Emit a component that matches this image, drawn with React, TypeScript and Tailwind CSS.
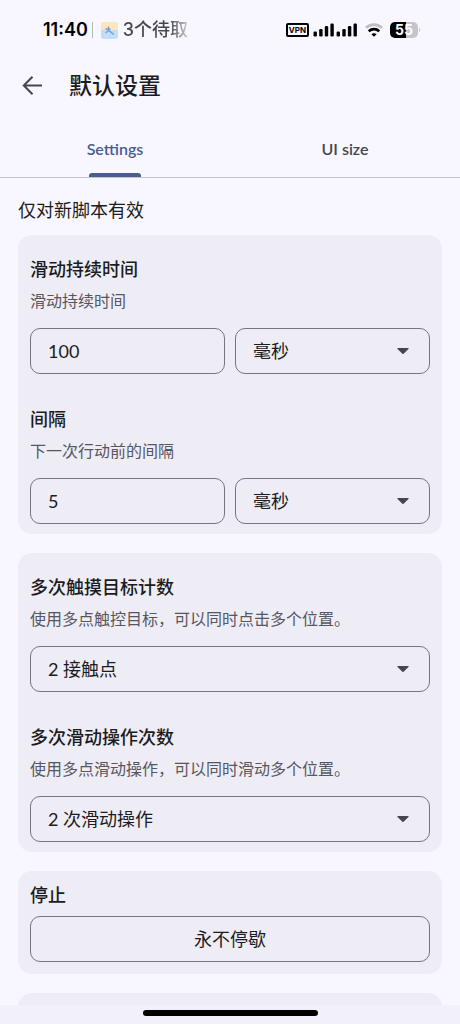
import { ReactNode, useId, useState } from 'react';

const fieldClass =
  'h-[46px] w-full min-w-0 rounded-[10px] border border-[#767680] bg-transparent px-[17px] text-lg text-[#1b1b21] outline-none focus:border-[#4b5c92]';

type SelectProps = {
  options: string[];
  id?: string;
  label?: string;
};

const SelectField = ({ options, id, label }: SelectProps) => (
  <div className="relative min-w-0 flex-1">
    <select id={id} aria-label={label} className={`${fieldClass} appearance-none`}>
      {options.map((option) => (
        <option key={option}>{option}</option>
      ))}
    </select>
    <svg
      className="pointer-events-none absolute top-1/2 right-[21px] h-[6px] w-3 -translate-y-1/2 text-[#45464f]"
      viewBox="0 0 12 6"
      fill="currentColor"
      aria-hidden="true"
    >
      <path d="M.9 0h10.200c.6 0 .8.5.4.9L6.600 5.700c-.35.35-.85.35-1.200 0L.5.9C.1.5.3 0 .9 0z" />
    </svg>
  </div>
);

type SettingProps = {
  title: string;
  description: string;
  children: (id: string) => ReactNode;
};

const Setting = ({ title, description, children }: SettingProps) => {
  const id = useId();

  return (
    <div>
      <label htmlFor={id} className="block text-lg leading-8 font-medium text-[#1b1b21]">
        {title}
      </label>
      <p className="text-base leading-8 text-[#56565f]">{description}</p>
      <div className="mt-[11px] flex gap-[10px]">{children(id)}</div>
    </div>
  );
};

type NumberFieldProps = {
  id: string;
  initial: string;
};

const NumberField = ({ id, initial }: NumberFieldProps) => {
  const [value, setValue] = useState(initial);

  return (
    <div className="min-w-0 flex-1">
      <input
        id={id}
        inputMode="numeric"
        className={fieldClass}
        value={value}
        onChange={(e) => setValue(e.target.value)}
      />
    </div>
  );
};

const Card = ({ children }: { children: ReactNode }) => (
  <section className="flex shrink-0 flex-col gap-[29px] rounded-[14px] bg-[#eeedf6] px-3 pt-[18px] pb-[10px]">
    {children}
  </section>
);

const StatusBar = () => (
  <div className="flex h-[57px] shrink-0 items-center justify-between pt-[3px] pr-10 pl-[43px]">
    <div className="flex items-center">
      <span className="font-['Inter',sans-serif] text-lg font-semibold text-black">11:40</span>
      <span className="ml-1 h-4 w-px bg-[#b5b5bd]" />
      <svg className="ml-2 size-[17px]" viewBox="0 0 17 17" aria-hidden="true">
        <rect width="17" height="17" rx="3" fill="#c3dcfa" />
        <path d="M0 8V3a3 3 0 0 1 3-3h11a3 3 0 0 1 3 3v5z" fill="#fbe6bd" />
        <path d="M4.500 7h5M7.500 4.500v4L4.500 11M7.500 8.500c2 .5 3 3 5.500 4" stroke="#6fa0d2" strokeWidth="1.300" fill="none" />
      </svg>
      <span className="ml-[5px] bg-linear-to-r from-[#45454c] from-70% to-[#d0d0d8] bg-clip-text font-['Inter','Noto_Sans_CJK_SC',sans-serif] text-lg font-medium text-transparent">
        3个待取
      </span>
    </div>
    <div className="flex items-center text-black">
      <span className="flex h-[14px] w-[23px] items-center justify-center rounded-xs border-2 border-black font-['Inter',sans-serif] text-[8px] font-bold">
        VPN
      </span>
      <svg className="ml-1 h-[14px] w-[45px]" viewBox="0 0 45 14" fill="currentColor" aria-hidden="true">
        <rect x="0.500" y="8.500" width="3.400" height="5" rx="1.200" />
        <rect x="6.200" y="6" width="3.400" height="7.500" rx="1.200" />
        <rect x="11.800" y="3" width="3.400" height="10.500" rx="1.200" />
        <rect x="17.400" y="0.500" width="3.400" height="13" rx="1.200" />
        <rect x="23.600" y="8.500" width="3.400" height="5" rx="1.200" />
        <rect x="29.300" y="6" width="3.400" height="7.500" rx="1.200" />
        <rect x="34.900" y="3" width="3.400" height="10.500" rx="1.200" />
        <rect x="40.500" y="0.500" width="3.400" height="13" rx="1.200" />
      </svg>
      <svg className="ml-[7px] h-[14px] w-[18px]" viewBox="0 0 18 14" fill="none" aria-hidden="true">
        <path d="M1 4.800C5.500.5 12.500.5 17 4.800" stroke="#bdbdc4" strokeWidth="2.600" />
        <path d="M3.700 8.300c3.200-2.800 7.400-2.800 10.600 0" stroke="#000" strokeWidth="2.800" />
        <path d="M6.400 11.200c1.600-1.300 3.600-1.300 5.200 0L9 13.800z" fill="#000" />
      </svg>
      <span className="ml-[7px] flex h-4 w-[28px] items-center justify-center rounded-[5px] bg-linear-to-r from-black from-56% to-[#c4c4cb] to-56% font-['Inter',sans-serif] text-sm font-bold text-white">
        55
      </span>
      <span className="ml-px h-1 w-px rounded-r-full bg-[#c4c4cb]" />
    </div>
  </div>
);

const tabs = ['Settings', 'UI size'];

const App = () => {
  const [activeTab, setActiveTab] = useState(tabs[0]);

  return (
    <div className="flex h-screen flex-col overflow-hidden bg-[#f8f7ff] font-['Lato','Noto_Sans_CJK_SC',sans-serif]">
      <StatusBar />

      <header className="flex h-[57px] shrink-0 items-center px-[22px]">
        <button type="button" aria-label="返回" className="text-[#45464f]">
          <svg className="size-[21px]" viewBox="0 0 21 21" fill="none" stroke="currentColor" strokeWidth="2" aria-hidden="true">
            <path d="M20 10.500H2.500M10.500 1.800l-8.700 8.700 8.700 8.700" />
          </svg>
        </button>
        <h1 className="ml-[26px] text-[23px] font-medium text-[#1b1b21]">默认设置</h1>
      </header>

      <div role="tablist" className="flex h-16 shrink-0 border-b border-[#c5c5d0]">
        {tabs.map((tab) => (
          <button
            key={tab}
            type="button"
            role="tab"
            aria-selected={tab === activeTab}
            onClick={() => setActiveTab(tab)}
            className={`flex flex-1 flex-col items-center justify-end font-semibold ${
              tab === activeTab ? 'text-[#4b5c92]' : 'text-[#45464f]'
            }`}
          >
            <span className="text-base">{tab}</span>
            <span
              className={`mt-3 h-1 w-[52px] rounded-t-[3px] ${tab === activeTab ? 'bg-[#4b5c92]' : ''}`}
            />
          </button>
        ))}
      </div>

      <main className="flex min-h-0 flex-1 flex-col gap-[19px] overflow-y-auto px-[18px] [scrollbar-width:none]">
        <p className="-mb-[10px] pt-4 text-lg leading-8 text-[#1b1b21]">仅对新脚本有效</p>

        <Card>
          <Setting title="滑动持续时间" description="滑动持续时间">
            {(id) => (
              <>
                <NumberField id={id} initial="100" />
                <SelectField label="滑动持续时间" options={['毫秒']} />
              </>
            )}
          </Setting>
          <Setting title="间隔" description="下一次行动前的间隔">
            {(id) => (
              <>
                <NumberField id={id} initial="5" />
                <SelectField label="间隔" options={['毫秒']} />
              </>
            )}
          </Setting>
        </Card>

        <Card>
          <Setting title="多次触摸目标计数" description="使用多点触控目标，可以同时点击多个位置。">
            {(id) => <SelectField id={id} options={['2 接触点']} />}
          </Setting>
          <Setting title="多次滑动操作次数" description="使用多点滑动操作，可以同时滑动多个位置。">
            {(id) => <SelectField id={id} options={['2 次滑动操作']} />}
          </Setting>
        </Card>

        <section className="shrink-0 rounded-[14px] bg-[#eeedf6] px-3 pt-2 pb-3">
          <h2 className="text-lg leading-8 font-medium text-[#1b1b21]">停止</h2>
          <button type="button" className={`${fieldClass} mt-[5px] block`}>
            永不停歇
          </button>
        </section>

        <section className="h-[100px] shrink-0 rounded-[14px] bg-[#eeedf6]" />
      </main>

      <footer className="flex h-[19px] shrink-0 justify-center bg-[#f2f1fa] pt-[5px]">
        <div className="h-[6px] w-[175px] rounded-full bg-black" />
      </footer>
    </div>
  );
};

export default App;
